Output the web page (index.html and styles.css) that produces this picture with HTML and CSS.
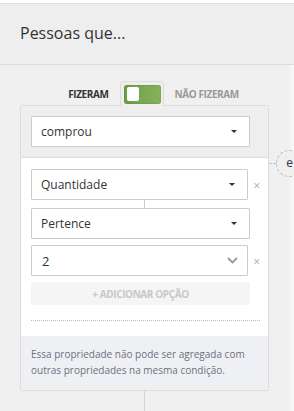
FILE: index.html
```html
<!DOCTYPE html>
<html lang="pt">
<head>
    <meta charset="UTF-8">
    <title>Pessoas que...</title>
    <link rel="stylesheet" href="styles.css">
</head>
<body>

<div class="header">
    <h1>Pessoas que...</h1>
</div>

<div class="canvas">
    <div class="flow">

        <!-- Fizeram / Nao fizeram -->
        <div class="toggle-row">
            <span class="lbl on">FIZERAM</span>
            <div class="tab">
                <div class="switch"><span class="knob"></span></div>
            </div>
            <span class="lbl off">NÃO FIZERAM</span>
        </div>

        <div class="card">
            <div class="card-top">
                <div class="select">comprou <span class="caret"></span></div>
            </div>

            <div class="card-body">
                <div class="row">
                    <div class="select">Quantidade <span class="caret"></span></div>
                    <span class="remove">×</span>
                </div>
                <div class="link"></div>
                <div class="row">
                    <div class="select">Pertence <span class="caret"></span></div>
                </div>
                <div class="row">
                    <div class="select num">2
                        <svg class="chev" width="11" height="7" viewBox="0 0 11 7"><path d="M1 1 L5.5 5.5 L10 1" fill="none" stroke="#999" stroke-width="1.8"/></svg>
                    </div>
                    <span class="remove">×</span>
                </div>
                <div class="add">+ ADICIONAR OPÇÃO</div>
                <div class="dots"></div>
            </div>

            <div class="card-note">
                Essa propriedade não pode ser agregada com outras propriedades na mesma condição.
            </div>

            <!-- conector "e" -->
            <div class="and"><span>e</span></div>
        </div>

        <div class="stem"></div>
        <div class="node"></div>
    </div>
    <div class="side"></div>
</div>

</body>
</html>
```

FILE: styles.css
```css
html, body {
    margin: 0;
    padding: 0;
    overflow: hidden;
}

body {
    background: #fff;
    font-family: "Open Sans", "Liberation Sans", sans-serif;
    color: #333;
    padding-top: 3px;
    height: 411px;
    box-sizing: border-box;
    display: flex;
    flex-direction: column;
}

.header {
    height: 60px;
    background: #eeeeee;
    border-top: 1px solid #dddddd;
    border-bottom: 1px solid #dddddd;
    display: flex;
    align-items: center;
    padding-left: 20px;
    flex-shrink: 0;
}

.header h1 {
    margin: 0;
    font-size: 16px;
    font-weight: normal;
    color: #333;
    padding-bottom: 3px;
}

.canvas {
    flex: 1;
    display: flex;
    background: #f0f0f0;
}

.flow {
    width: 290px;
    padding-left: 20px;
    box-sizing: border-box;
    display: flex;
    flex-direction: column;
    align-items: flex-start;
}

.side {
    flex: 1;
    background: #f6f6f6;
}

/* toggle */
.toggle-row {
    width: 249px;
    display: grid;
    grid-template-columns: 1fr auto 1fr;
    align-items: end;
    margin-top: 16px;
    margin-left: -3px;
}

.lbl {
    font-size: 10px;
    font-weight: bold;
    line-height: 12px;
    margin-bottom: 5px;
    letter-spacing: -0.4px;
}

.lbl.on { color: #333; margin-right: 11px; justify-self: end; }
.lbl.off { color: #999; margin-left: 11px; justify-self: start; }

.tab {
    width: 44px;
    height: 25px;
    box-sizing: border-box;
    border: 1px solid #dddddd;
    border-bottom: none;
    border-radius: 3px 3px 0 0;
    background: #eeeeee;
    padding: 3px 0 0 3px;
    margin-bottom: -1px;
    position: relative;
    z-index: 1;
}

.switch {
    width: 37px;
    height: 19px;
    border-radius: 3px;
    background: linear-gradient(90deg, #6f9e47, #86b45c);
    box-shadow: inset 0 0 2px rgba(0, 0, 0, 0.25);
    padding: 2px 3px;
    box-sizing: border-box;
}

.knob {
    display: block;
    width: 12px;
    height: 14px;
    background: #fff;
    border-radius: 2px;
}

/* card */
.card {
    width: 249px;
    box-sizing: border-box;
    border: 1px solid #dddddd;
    border-radius: 2px;
    background: #fff;
    position: relative;
}

.card-top {
    background: #eeeeee;
    padding: 10px 17px 10px 10px;
    border-bottom: 1px solid #dddddd;
}

.select {
    height: 31px;
    width: 219px;
    box-sizing: border-box;
    border: 1px solid #cccccc;
    background: #fff;
    display: flex;
    align-items: center;
    justify-content: space-between;
    padding: 0 12px 0 9px;
    font-size: 12px;
    color: #333;
    border-radius: 1px;
}

.select.num {
    padding-left: 10px;
    font-size: 13px;
    padding-right: 9px;
}

.caret {
    width: 0;
    height: 0;
    border-left: 3.5px solid transparent;
    border-right: 3.5px solid transparent;
    border-top: 3.5px solid #333;
}

.card-body {
    padding: 11px 8px 0 10px;
}

.row {
    display: flex;
    align-items: center;
    margin-bottom: 6px;
}

.row:first-child { margin-bottom: 0; }

.remove {
    color: #aaa;
    font-size: 12px;
    margin-left: 5px;
    line-height: 1;
    padding-top: 2px;
}

.link {
    width: 1px;
    height: 8px;
    background: #cccccc;
    margin-left: 113px;
}

.add {
    width: 219px;
    height: 23px;
    background: #f5f5f5;
    border-radius: 2px;
    color: #c8c8c8;
    font-size: 10px;
    font-weight: bold;
    letter-spacing: -0.4px;
    display: flex;
    align-items: center;
    justify-content: center;
}

.dots {
    margin-top: 15px;
    border-top: 1px dotted #bbbbbb;
    height: 15px;
}

.card-note {
    background: #eff0f4;
    padding: 10px 10px 12px;
    font-size: 10px;
    line-height: 16px;
    color: #6c707c;
}

.and {
    position: absolute;
    left: 248px;
    top: 44px;
    display: flex;
    align-items: center;
}

.and::before {
    content: "";
    width: 7px;
    border-top: 1px dashed #bbb;
}

.and span {
    width: 27px;
    height: 27px;
    border: 1px dashed #bbb;
    border-radius: 50%;
    background: #f0f0f0;
    display: flex;
    align-items: center;
    justify-content: center;
    font-size: 12px;
    box-sizing: border-box;
    padding-bottom: 2px;
}

.stem {
    width: 1px;
    height: 20px;
    background: #d4d4d4;
    margin-left: 124px;
}

.node {
    width: 28px;
    height: 28px;
    border-radius: 50%;
    background: #fff;
    border: 1px solid #dddddd;
    margin-left: 110px;
}
```
